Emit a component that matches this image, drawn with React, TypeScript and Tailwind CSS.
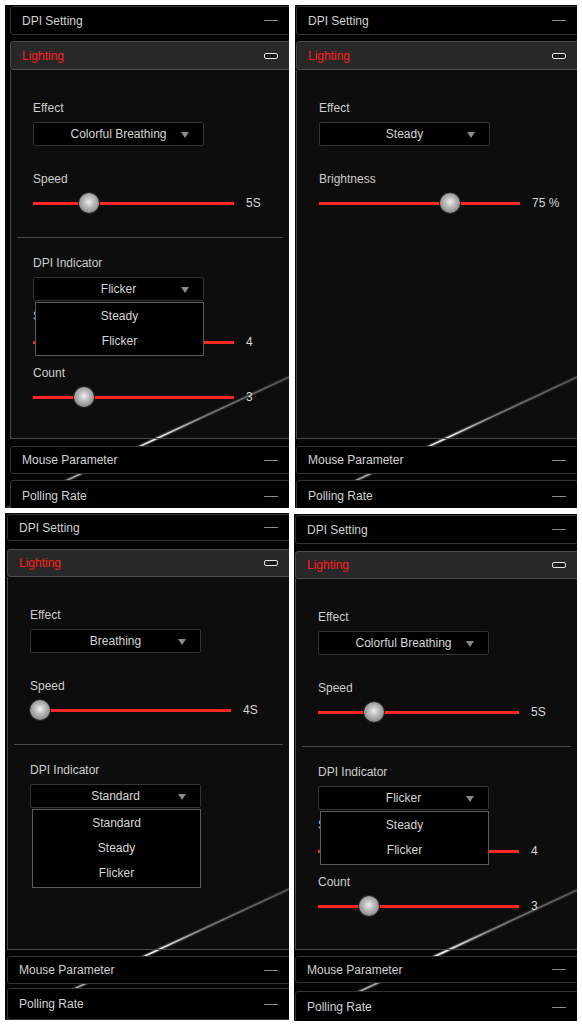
import type { ReactNode } from 'react';

type Dims = {
  w: number;
  h: number;
  shift: number;
  pt: number;
  h1: number;
  g1: number;
  h2: number;
  content: number;
  g2: number;
  h3: number;
  g3: number;
};

function Header({ title, open, height }: { title: string; open?: boolean; height: number }) {
  return (
    <div
      className={`relative z-10 -mr-1 flex shrink-0 items-center justify-between rounded-[3px] border pl-[11px] pr-[14px] ${
        open ? 'border-[#4d4d4d] bg-[#282828]' : 'border-[#333333] bg-black'
      }`}
      style={{ height }}
    >
      <span className={open ? 'text-[#ff1e1e]' : 'text-[#d2d2d2]'}>{title}</span>
      {open ? (
        <span className="h-[6px] w-[14px] rounded-[2px] border-[1.5px] border-[#e6e6e6] bg-[#1c1c1c]" />
      ) : (
        <span className="h-px w-[14px] bg-[#8c8c8c]" />
      )}
    </div>
  );
}

function Label({ children, className = '' }: { children: ReactNode; className?: string }) {
  return <div className={`h-4 leading-4 text-[#cdcdcd] ${className}`}>{children}</div>;
}

function Select({ value, options, className = '' }: { value: string; options?: string[]; className?: string }) {
  return (
    <div className={`relative w-[171px] ${className}`}>
      <div className="relative flex h-6 items-center justify-center rounded-[2px] border border-[#333333] bg-black text-[#d6d6d6]">
        <span>{value}</span>
        <svg className="absolute right-[14px] top-[9px] h-[6px] w-[8px]" viewBox="0 0 8 6">
          <polygon points="0,0 8,0 4,6" fill="#8a8a8a" />
        </svg>
      </div>
      {options && (
        <div className="absolute left-[2px] right-0 top-[25px] z-20 border border-[#5c5c5c] bg-black pb-[2px] text-[#d6d6d6]">
          {options.map((o) => (
            <div key={o} className="flex h-[25px] items-center justify-center">
              {o}
            </div>
          ))}
        </div>
      )}
    </div>
  );
}

function Slider({ pos, value, className = '' }: { pos: number; value: string; className?: string }) {
  return (
    <div className={`flex h-5 items-center ${className}`}>
      <div className="relative h-[3px] w-[201px] bg-[#ff2626]">
        <span
          className="absolute top-1/2 h-5 w-5 -translate-x-1/2 -translate-y-1/2 rounded-full bg-[radial-gradient(circle_at_50%_45%,#f0f0f0_0%,#c2c2c2_30%,#8f8f8f_70%,#575757_100%)] shadow-[0_0_0_1px_#262626]"
          style={{ left: pos }}
        />
      </div>
      <span className="ml-[12px] text-[#d6d6d6]">{value}</span>
    </div>
  );
}

function Divider() {
  return <div className="-ml-[16px] mr-[9px] mt-[24px] h-px bg-[#4a4a4a]" />;
}

function Streak({ w, h, id }: { w: number; h: number; id: string }) {
  return (
    <svg className="absolute inset-0" width={w} height={h} viewBox={`0 0 ${w} ${h}`}>
      <defs>
        <linearGradient id={id} gradientUnits="userSpaceOnUse" x1={w} y1={h - 131} x2={0} y2={h + 1}>
          <stop offset="0" stopColor="#ffffff" stopOpacity="0.25" />
          <stop offset="0.3" stopColor="#ffffff" stopOpacity="0.4" />
          <stop offset="0.47" stopColor="#ffffff" stopOpacity="0.95" />
          <stop offset="0.62" stopColor="#ffffff" stopOpacity="0.5" />
          <stop offset="0.75" stopColor="#ffffff" stopOpacity="0.6" />
          <stop offset="1" stopColor="#ffffff" stopOpacity="0.2" />
        </linearGradient>
      </defs>
      <line x1={w} y1={h - 131} x2={0} y2={h + 1} stroke={`url(#${id})`} strokeWidth="4" opacity="0.25" />
      <line x1={w} y1={h - 131} x2={0} y2={h + 1} stroke={`url(#${id})`} strokeWidth="1.6" />
    </svg>
  );
}

function Panel({ d, id, children, className = '' }: { d: Dims; id: string; children: ReactNode; className?: string }) {
  return (
    <div
      className={`relative flex flex-col overflow-hidden bg-[#040404] ${className}`}
      style={{ width: d.w, height: d.h, paddingLeft: d.shift, paddingTop: d.pt }}
    >
      <Streak w={d.w} h={d.h} id={id} />
      <Header title="DPI Setting" height={d.h1} />
      <div className="shrink-0" style={{ height: d.g1 }} />
      <Header title="Lighting" open height={d.h2} />
      <div
        className="relative -mr-1 flex shrink-0 flex-col border-x border-b border-[#4a4a4a] bg-white/[0.035] pl-[22px] pt-[30px]"
        style={{ height: d.content }}
      >
        {children}
      </div>
      <div className="shrink-0" style={{ height: d.g2 }} />
      <Header title="Mouse Parameter" height={d.h3} />
      <div className="shrink-0" style={{ height: d.g3 }} />
      <Header title="Polling Rate" height={32} />
    </div>
  );
}

const tl: Dims = { w: 284, h: 503, shift: 5, pt: 1, h1: 29, g1: 6, h2: 29, content: 369, g2: 7, h3: 28, g3: 6 };
const tr: Dims = { w: 282, h: 503, shift: 1, pt: 1, h1: 29, g1: 6, h2: 29, content: 369, g2: 7, h3: 28, g3: 6 };
const bl: Dims = { w: 284, h: 507, shift: 2, pt: 1, h1: 27, g1: 8, h2: 28, content: 373, g2: 6, h3: 28, g3: 4 };
const br: Dims = { w: 283, h: 507, shift: 1, pt: 1, h1: 29, g1: 7, h2: 28, content: 371, g2: 6, h3: 27, g3: 8 };

export default function App() {
  return (
    <div className="h-[1027px] w-[582px] bg-white pl-[5px] pt-[5px] font-['Liberation_Sans',Arial,sans-serif] text-[12px]">
      <div className="grid grid-cols-[284px_282px] gap-x-[6px] gap-y-[5px]">
        <Panel d={tl} id="s1">
          <Label>Effect</Label>
          <Select value="Colorful Breathing" className="mt-[6px]" />
          <Label className="mt-[25px]">Speed</Label>
          <Slider pos={56} value="5S" className="mt-[6px]" />
          <Divider />
          <Label className="mt-[17px]">DPI Indicator</Label>
          <Select value="Flicker" options={['Steady', 'Flicker']} className="z-20 mt-[6px]" />
          <Label className="mt-[7px]">Speed</Label>
          <Slider pos={100} value="4" className="mt-[8px]" />
          <Label className="mt-[13px]">Count</Label>
          <Slider pos={51} value="3" className="mt-[6px]" />
        </Panel>

        <Panel d={tr} id="s2">
          <Label>Effect</Label>
          <Select value="Steady" className="mt-[6px]" />
          <Label className="mt-[25px]">Brightness</Label>
          <Slider pos={131} value="75 %" className="mt-[6px]" />
        </Panel>

        <Panel d={bl} id="s3">
          <Label>Effect</Label>
          <Select value="Breathing" className="mt-[6px]" />
          <Label className="mt-[25px]">Speed</Label>
          <Slider pos={10} value="4S" className="mt-[6px]" />
          <Divider />
          <Label className="mt-[17px]">DPI Indicator</Label>
          <Select value="Standard" options={['Standard', 'Steady', 'Flicker']} className="z-20 mt-[6px]" />
        </Panel>

        <Panel d={br} id="s4" className="-ml-px mt-px">
          <Label>Effect</Label>
          <Select value="Colorful Breathing" className="mt-[6px]" />
          <Label className="mt-[25px]">Speed</Label>
          <Slider pos={56} value="5S" className="mt-[6px]" />
          <Divider />
          <Label className="mt-[17px]">DPI Indicator</Label>
          <Select value="Flicker" options={['Steady', 'Flicker']} className="z-20 mt-[6px]" />
          <Label className="mt-[7px]">Speed</Label>
          <Slider pos={100} value="4" className="mt-[8px]" />
          <Label className="mt-[13px]">Count</Label>
          <Slider pos={51} value="3" className="mt-[6px]" />
        </Panel>
      </div>
    </div>
  );
}
